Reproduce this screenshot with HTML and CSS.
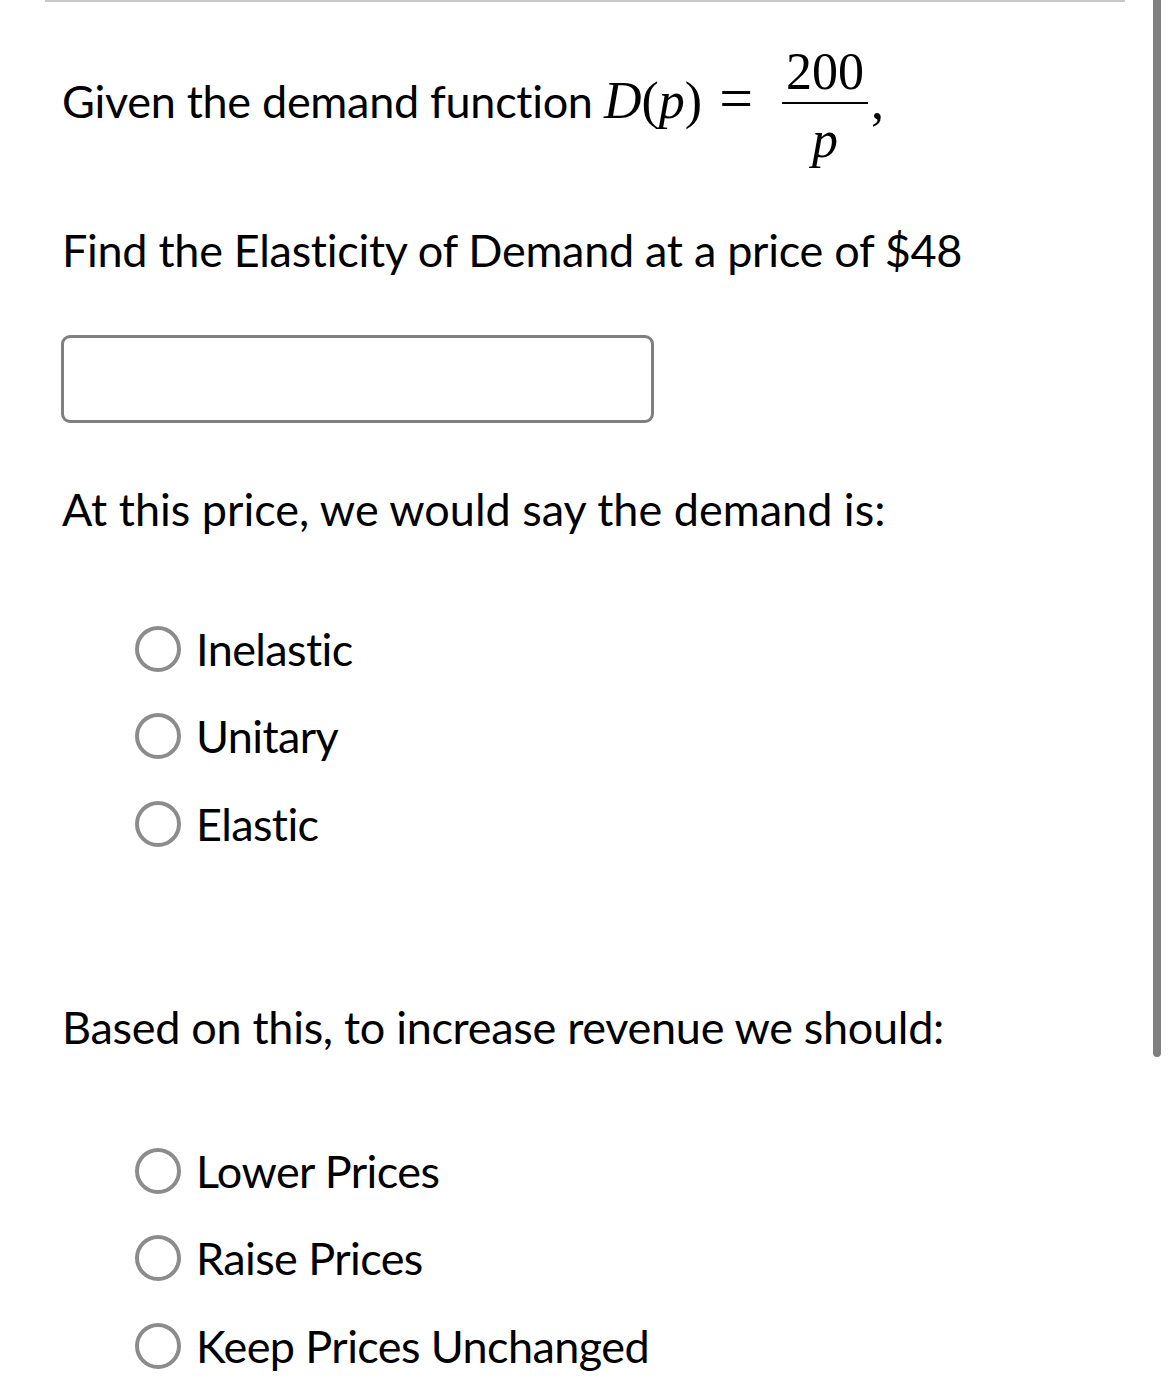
FILE: index.html
```html
<!DOCTYPE html>
<html>
<head>
<meta charset="utf-8">
<link rel="stylesheet" href="styles.css">
</head>
<body>
<div class="rule"></div>
<div class="scrollbar"></div>
<main class="content">
  <div class="q1">Given the demand function <span class="math"><span class="mi">D</span><span class="mo">(</span><span class="mi">p</span><span class="mo">)</span><span class="eq">=</span><span class="frac"><span class="num">200</span><span class="bar"></span><span class="den mi">p</span></span><span class="comma">,</span></span></div>

  <div class="find">Find the Elasticity of Demand at a price of $48</div>

  <input class="answer" type="text" aria-label="Elasticity">

  <div class="prompt at">At this price, we would say the demand is:</div>

  <div class="options first">
    <label class="opt"><input type="radio" name="d"><span>Inelastic</span></label>
    <label class="opt"><input type="radio" name="d"><span>Unitary</span></label>
    <label class="opt"><input type="radio" name="d"><span>Elastic</span></label>
  </div>

  <div class="prompt based">Based on this, to increase revenue we should:</div>

  <div class="options second">
    <label class="opt"><input type="radio" name="r"><span>Lower Prices</span></label>
    <label class="opt"><input type="radio" name="r"><span>Raise Prices</span></label>
    <label class="opt"><input type="radio" name="r"><span>Keep Prices Unchanged</span></label>
  </div>
</main>
</body>
</html>
```
FILE: styles.css
```css
html, body {
  margin: 0;
  padding: 0;
  background: #ffffff;
}
body {
  font-family: Lato, "Open Sans", sans-serif;
  font-size: 45px;
  line-height: 54px;
  letter-spacing: -0.3px;
  color: #000000;
  width: 1170px;
  height: 1388px;
  overflow: hidden;
}
.rule {
  margin-left: 45px;
  width: 1080px;
  border-top: 2px solid #c8c8c8;
}
.scrollbar {
  position: absolute;
  top: 0;
  left: 1153px;
  width: 8px;
  height: 1057px;
  background: #808080;
  border-radius: 0 0 4px 4px;
}
.content {
  padding-left: 62px;
}
.q1 {
  margin-top: 43.5px;
  white-space: nowrap;
}
.math {
  font-family: "Liberation Serif", "DejaVu Serif", serif;
  font-size: 52px;
  letter-spacing: 0;
}
.mi {
  font-style: italic;
}
.mo {
  font-style: normal;
}
.eq {
  font-size: 60px;
  line-height: 52px;
  margin: 0 29px 0 17px;
}
.frac {
  display: inline-flex;
  flex-direction: column;
  align-items: stretch;
  vertical-align: middle;
  text-align: center;
}
.num, .den {
  line-height: 52px;
  padding: 0 4px;
}
.bar {
  height: 2px;
  background: #000;
  margin-top: 4.5px;
}
.den {
  margin-top: 9.8px;
}
.comma {
  margin-left: 3px;
}
.find {
  margin-top: 57px;
}
.answer {
  display: block;
  box-sizing: border-box;
  width: 593px;
  height: 88px;
  margin: 58px 0 0 -1px;
  border: 3px solid #7f7f7f;
  border-radius: 9px;
  background: #fff;
  font: inherit;
  padding: 0 14px;
  outline: none;
}
.at {
  margin-top: 59px;
  letter-spacing: 0;
}
.options {
  display: flex;
  flex-direction: column;
  gap: 33.5px;
  padding-left: 73px;
}
.options.first {
  margin-top: 86px;
}
.based {
  margin-top: 149px;
}
.options.second {
  margin-top: 90px;
}
.opt {
  display: flex;
  align-items: center;
  gap: 15px;
  height: 54px;
  white-space: nowrap;
  letter-spacing: -0.6px;
}
.opt input {
  appearance: none;
  -webkit-appearance: none;
  box-sizing: border-box;
  width: 46px;
  height: 46px;
  margin: 0;
  border: 4px solid #8c8c8c;
  border-radius: 50%;
  background: #fff;
  flex: none;
}
```
